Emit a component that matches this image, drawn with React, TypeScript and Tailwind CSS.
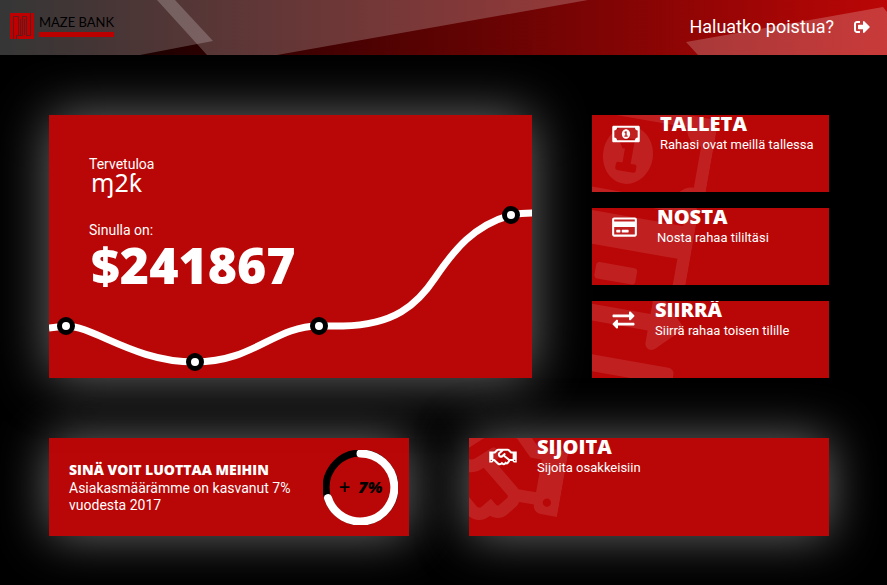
import type { IconType } from "react-icons";
import {
  FaExchangeAlt,
  FaRegCreditCard,
  FaRegHandshake,
  FaRegMoneyBillAlt,
  FaSignOutAlt,
} from "react-icons/fa";

type Action = {
  title: string;
  text: string;
  Icon: IconType;
  iconSize: string;
  mark: string;
};

const ACTIONS: Action[] = [
  {
    title: "TALLETA",
    text: "Rahasi ovat meillä tallessa",
    Icon: FaRegMoneyBillAlt,
    iconSize: "w-[28px]",
    mark: "left-9 top-10 w-[166px]",
  },
  {
    title: "NOSTA",
    text: "Nosta rahaa tililtäsi",
    Icon: FaRegCreditCard,
    iconSize: "w-[25px]",
    mark: "left-6 top-10 w-[150px]",
  },
  {
    title: "SIIRRÄ",
    text: "Siirrä rahaa toisen tilille",
    Icon: FaExchangeAlt,
    iconSize: "w-[23px]",
    mark: "left-5 top-10 w-[133px]",
  },
];

const INVEST: Action = {
  title: "SIJOITA",
  text: "Sijoita osakkeisiin",
  Icon: FaRegHandshake,
  iconSize: "w-[28px]",
  mark: "left-3 top-8 w-[166px]",
};

const POINTS = [
  [17, 211],
  [146, 247],
  [270, 211],
  [462, 100],
];

function Logo() {
  return (
    <div className="flex items-start gap-[5px] pt-[13px]">
      <svg width="24" height="26" viewBox="0 0 24 26" aria-hidden="true">
        <rect width="24" height="26" fill="#c00000" />
        <path
          d="M3.5 26V3.5H8.5V22.5H12.5V3.5H16.5V22.5H20.5V0M6.5 26V22.5H8.5M10.5 22V6M14.5 22V6"
          fill="none"
          stroke="#5a1c1c"
          strokeWidth="1"
        />
      </svg>
      <div className="flex flex-col">
        <span className="font-[Lato,sans-serif] text-[13px] leading-[19px] text-black">MAZE BANK</span>
        <span className="h-[5px] w-full bg-[#bb0000]" />
      </div>
    </div>
  );
}

function Header() {
  return (
    <header className="relative h-[55px] bg-linear-to-r/srgb from-black to-[#bb0606]">
      <svg
        className="absolute inset-0 h-full w-full"
        viewBox="0 0 887 55"
        preserveAspectRatio="none"
        fill="#ffffff"
        fillOpacity="0.21"
        aria-hidden="true"
      >
        <polygon points="0,0 175,0 213,41 140,55 0,55" />
        <polygon points="157,0 588,0 277,55 207,55" />
        <polygon points="686,42 883,7 887,12 887,55 698,55" />
      </svg>
      <div className="relative flex h-full items-start justify-between pl-[10px] pr-[17px]">
        <Logo />
        <a href="#logout" className="flex h-[54px] items-center gap-5 text-lg text-white">
          Haluatko poistua?
          <FaSignOutAlt size={16} />
        </a>
      </div>
    </header>
  );
}

function ActionCard({ action, className }: { action: Action; className: string }) {
  const { Icon, title, text, iconSize, mark } = action;
  return (
    <button
      type="button"
      className={`relative flex items-start gap-5 overflow-hidden bg-[#b90606] pl-5 text-left text-white ${className}`}
    >
      <Icon
        className={`absolute h-[133px] max-w-none -translate-x-1/2 -translate-y-1/2 rotate-10 opacity-10 ${mark}`}
        aria-hidden="true"
      />
      <Icon className={`relative mt-2 h-[22px] shrink-0 ${iconSize}`} aria-hidden="true" />
      <span className="relative flex flex-col">
        <span className="font-['Open_Sans',sans-serif] text-xl font-extrabold leading-[18px]">{title}</span>
        <span className="text-[13px] leading-6">{text}</span>
      </span>
    </button>
  );
}

function BalanceCard() {
  return (
    <section className="relative bg-[#b90606] px-10 pt-10 text-white shadow-[0_0_50px_#6d6d6d]">
      <svg className="absolute inset-0 h-full w-full" viewBox="0 0 483 263" preserveAspectRatio="none" aria-hidden="true">
        <path
          d="M0 213L17 211C45 211 85 247 146 247C205 247 225 211 270 211H294C345 210 368 190 386 163C405 135 425 110 462 100Q472 98 483 98"
          fill="none"
          stroke="#ffffff"
          strokeWidth="7"
        />
        {POINTS.map(([x, y]) => (
          <circle key={x} cx={x} cy={y} r="6.5" fill="#ffffff" stroke="#000000" strokeWidth="5" />
        ))}
      </svg>
      <div className="relative">
        <p className="text-sm leading-[18px]">Tervetuloa</p>
        <p className="pl-0.5 font-['Noto_Sans','DejaVu_Sans',sans-serif] text-[25px] leading-[18px]">ɱ2ƙ</p>
        <p className="mt-[30px] text-sm leading-[18px]">Sinulla on:</p>
        <p className="pl-0.5 font-['Open_Sans',sans-serif] text-[50px] font-extrabold leading-[52px]">$241867</p>
      </div>
    </section>
  );
}

function TrustCard() {
  return (
    <section className="flex h-[98px] items-center justify-between bg-[#b90606] pl-5 pr-[11px] text-white shadow-[0_0_50px_#6d6d6d]">
      <div>
        <h2 className="font-['Open_Sans',sans-serif] text-sm font-extrabold leading-5">SINÄ VOIT LUOTTAA MEIHIN</h2>
        <p className="text-sm leading-[17px]">
          Asiakasmäärämme on kasvanut 7%
          <br />
          vuodesta 2017
        </p>
      </div>
      <div className="relative flex size-[75px] shrink-0 items-center justify-center gap-2 text-black">
        <svg className="absolute inset-0" width="75" height="75" viewBox="0 0 75 75" fill="none" aria-hidden="true">
          <circle cx="37.5" cy="37.5" r="34.5" stroke="#000000" strokeWidth="7" />
          <path d="M37.5 3.5A34 34 0 1 1 5 48" stroke="#ffffff" strokeWidth="8" strokeLinecap="round" />
        </svg>
        <span className="relative font-['Open_Sans',sans-serif] text-xl font-semibold">+</span>
        <span className="relative font-['Open_Sans',sans-serif] text-base font-extrabold italic">7%</span>
      </div>
    </section>
  );
}

export default function App() {
  return (
    <div className="min-h-screen bg-black font-[Roboto,sans-serif]">
      <Header />
      <main className="flex flex-col gap-[60px] pb-[49px] pl-[49px] pr-[58px] pt-[60px]">
        <div className="grid grid-cols-[1fr_237px] gap-[60px]">
          <BalanceCard />
          <div className="flex flex-col gap-4">
            {ACTIONS.map((action) => (
              <ActionCard key={action.title} action={action} className="h-[77px]" />
            ))}
          </div>
        </div>
        <div className="grid grid-cols-2 gap-[60px]">
          <TrustCard />
          <ActionCard action={INVEST} className="h-[98px] shadow-[0_0_50px_#6d6d6d]" />
        </div>
      </main>
    </div>
  );
}
